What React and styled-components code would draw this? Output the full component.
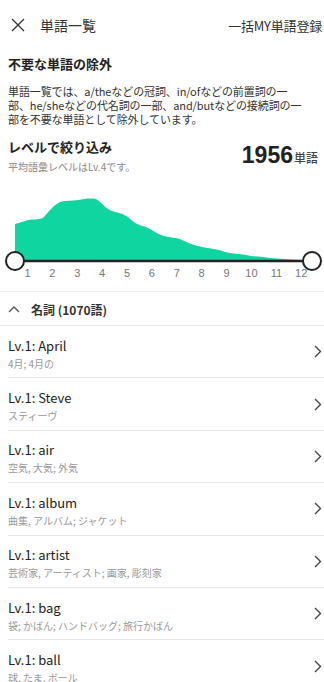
import React from "react";
import styled, { createGlobalStyle } from "styled-components";

const GlobalStyle = createGlobalStyle`
  body {
    margin: 0;
    background: #ffffff;
    font-family: "Noto Sans CJK JP", "Noto Sans", sans-serif;
    color: #222;
  }
`;

const words = [
    { title: "Lv.1: April", sub: "4月; 4月の" },
    { title: "Lv.1: Steve", sub: "スティーヴ" },
    { title: "Lv.1: air", sub: "空気, 大気; 外気" },
    { title: "Lv.1: album", sub: "曲集, アルバム; ジャケット" },
    { title: "Lv.1: artist", sub: "芸術家, アーティスト; 画家, 彫刻家" },
    { title: "Lv.1: bag", sub: "袋; かばん; ハンドバッグ; 旅行かばん" },
    { title: "Lv.1: ball", sub: "球, たま, ボール" },
];

const areaPath =
    "M15 33 C20 32 24 30 28 29 C34 28 38 29 43 27 C48 22 52 15 60 11 C66 9 72 10 78 9 C84 8 90 7 96 8 C102 11 104 17 112 20 C118 22 122 22 128 26 C134 32 138 34 146 36 C152 38 156 43 164 45 C170 47 176 46 182 49 C190 53 194 54 202 56 C210 58 214 57 222 60 C230 63 236 62 246 64 C254 66 260 65 270 67 C280 68 288 68 300 69 L312 70 L15 70 Z";

function Chart() {
    return (
        <ChartWrap>
            <svg width="324" height="82" viewBox="0 0 324 82">
                <path d={areaPath} fill="#0fd6a0" />
                <line x1="15" y1="70" x2="312" y2="70" stroke="#222" strokeWidth="2.5" />
                <circle cx="15" cy="70" r="9" fill="#fff" stroke="#222" strokeWidth="2" />
                <circle cx="312" cy="70" r="9" fill="#fff" stroke="#222" strokeWidth="2" />
            </svg>
            <AxisLabels>
                {Array.from({ length: 12 }, (_, i) => (
                    <span key={i}>{i + 1}</span>
                ))}
            </AxisLabels>
        </ChartWrap>
    );
}

function CloseIcon() {
    return (
        <svg width="14" height="14" viewBox="0 0 14 14">
            <path d="M1 1 L13 13 M13 1 L1 13" stroke="#333" strokeWidth="1.3" fill="none" />
        </svg>
    );
}

function ChevronRight() {
    return (
        <svg width="8" height="13" viewBox="0 0 8 13">
            <path d="M1 1 L6.5 6.5 L1 12" stroke="#444" strokeWidth="1.4" fill="none" />
        </svg>
    );
}

function ChevronUp() {
    return (
        <svg width="12" height="8" viewBox="0 0 12 8">
            <path d="M1 7 L6 2 L11 7" stroke="#555" strokeWidth="1.3" fill="none" />
        </svg>
    );
}

export default function App() {
    return (
        <Page>
            <GlobalStyle />
            <Header>
                <HeaderLeft>
                    <CloseIcon />
                    <HeaderTitle>単語一覧</HeaderTitle>
                </HeaderLeft>
                <HeaderAction>一括MY単語登録</HeaderAction>
            </Header>

            <Section>
                <SectionTitle>不要な単語の除外</SectionTitle>
                <Paragraph>
                    単語一覧では、a/theなどの冠詞、in/ofなどの前置詞の一
                    <br />
                    部、he/sheなどの代名詞の一部、and/butなどの接続詞の一
                    <br />
                    部を不要な単語として除外しています。
                </Paragraph>
            </Section>

            <LevelHead>
                <div>
                    <SectionTitle>レベルで絞り込み</SectionTitle>
                    <SubText>平均語彙レベルはLv.4です。</SubText>
                </div>
                <Count>
                    1956<small>単語</small>
                </Count>
            </LevelHead>

            <Chart />

            <GroupHeader>
                <ChevronUp />
                <GroupTitle>名詞 (1070語)</GroupTitle>
            </GroupHeader>

            <List>
                {words.map((w) => (
                    <Item key={w.title}>
                        <ItemText>
                            <ItemTitle>{w.title}</ItemTitle>
                            <ItemSub>{w.sub}</ItemSub>
                        </ItemText>
                        <ChevronRight />
                    </Item>
                ))}
            </List>
        </Page>
    );
}

const Page = styled.div`
    width: 324px;
    height: 682px;
    overflow: hidden;
    background: #fff;
`;

const Header = styled.div`
    height: 50px;
    display: flex;
    align-items: center;
    justify-content: space-between;
    padding: 0 2px 0 11px;
`;

const HeaderLeft = styled.div`
    display: flex;
    align-items: center;
    gap: 15px;
`;

const HeaderTitle = styled.span`
    font-size: 14px;
    color: #333;
`;

const HeaderAction = styled.span`
    font-size: 13px;
    color: #333;
    letter-spacing: -0.2px;
`;

const Section = styled.div`
    padding: 5px 8px 0;
`;

const SectionTitle = styled.div`
    font-size: 13px;
    font-weight: 700;
    color: #222;
    line-height: 18px;
`;

const Paragraph = styled.p`
    margin: 11px 0 0;
    font-size: 11px;
    line-height: 14px;
    color: #333;
    letter-spacing: -0.1px;
    white-space: nowrap;
`;

const LevelHead = styled.div`
    display: flex;
    justify-content: space-between;
    align-items: flex-start;
    padding: 12px 6px 0 8px;
`;

const SubText = styled.div`
    margin-top: 4px;
    font-size: 10px;
    color: #888;
    line-height: 14px;
`;

const Count = styled.div`
    margin-top: 4px;
    font-family: "Liberation Sans", Arial, sans-serif;
    font-size: 23px;
    font-weight: 700;
    color: #222;

    small {
        font-family: "Noto Sans CJK JP", sans-serif;
        font-size: 12px;
        font-weight: 500;
        color: #444;
        margin-left: 1px;
    }
`;

const ChartWrap = styled.div`
    margin-top: 17px;
    height: 100px;
    border-bottom: 1px solid #eee;

    svg {
        display: block;
    }
`;

const AxisLabels = styled.div`
    display: grid;
    grid-template-columns: repeat(12, 24.9px);
    padding-left: 15px;
    margin-top: -6px;

    span {
        text-align: center;
        font-family: "Liberation Sans", Arial, sans-serif;
        font-size: 11px;
        color: #777;
    }
`;

const GroupHeader = styled.div`
    height: 33px;
    display: flex;
    align-items: center;
    gap: 11px;
    padding-left: 8px;
    border-bottom: 1px solid #e6e6e6;
`;

const GroupTitle = styled.span`
    font-size: 12px;
    font-weight: 700;
    color: #333;
    margin-top: 1px;
`;

const List = styled.div`
    padding-left: 8px;
`;

const Item = styled.div`
    height: 51.4px;
    display: flex;
    align-items: center;
    justify-content: space-between;
    padding-right: 2px;
    border-bottom: 1px solid #e6e6e6;
`;

const ItemText = styled.div`
    display: flex;
    flex-direction: column;
    margin-top: 4px;
`;

const ItemTitle = styled.span`
    font-size: 13px;
    color: #222;
    line-height: 18px;
`;

const ItemSub = styled.span`
    margin-top: 2px;
    font-size: 10px;
    color: #999;
    line-height: 14px;
`;
